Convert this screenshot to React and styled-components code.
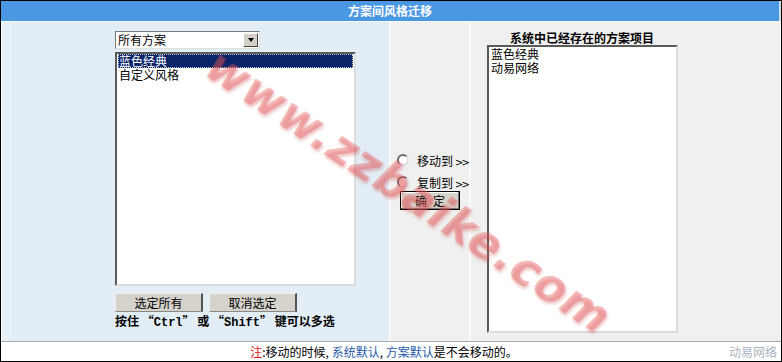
import React from "react";
import styled, { createGlobalStyle } from "styled-components";

const Global = createGlobalStyle`
  html, body { margin: 0; padding: 0; background: #fff; }
  body { font-family: "Noto Sans CJK SC", "DejaVu Sans", sans-serif; font-size: 12px; color: #000; }
  * { box-sizing: border-box; }
`;

const Frame = styled.div`
  position: relative;
  width: 782px;
  height: 362px;
  border: 1px solid #000;
  background: #fff;
  display: flex;
  flex-direction: column;
  overflow: hidden;
`;

const Header = styled.div`
  height: 20px;
  background: #4a97e2;
  color: #fff;
  font-weight: bold;
  font-size: 12px;
  line-height: 20px;
  text-align: center;
  border-right: 2px solid #cfe0ef;
`;

const Body = styled.div`
  height: 320px;
  display: grid;
  grid-template-columns: 387px 78px 309px;
  gap: 2px;
  padding: 1px 2px 0 1px;
  background: #fafafa;
`;

const Column = styled.div`
  background: ${(p) => p.$bg};
  display: flex;
  flex-direction: column;
  align-items: ${(p) => p.$align || "stretch"};
  padding: ${(p) => p.$pad};
  border-left: ${(p) => (p.$strip ? "10px solid #e8f0f7" : "none")};
`;

const SelectBox = styled.div`
  width: 145px;
  height: 18px;
  background: #fff;
  border-top: 1px solid #7a7a7a;
  border-left: 1px solid #7a7a7a;
  border-right: 1px solid #e0e0e0;
  border-bottom: 1px solid #e0e0e0;
  display: flex;
  align-items: center;
  justify-content: space-between;
  padding-left: 2px;
  line-height: 16px;
`;

const ArrowBtn = styled.div`
  width: 15px;
  height: 14px;
  margin-right: 1px;
  background: #d4d0c8;
  border-top: 1px solid #fff;
  border-left: 1px solid #fff;
  border-right: 1px solid #404040;
  border-bottom: 1px solid #404040;
  display: flex;
  align-items: center;
  justify-content: center;
  &::after {
    content: "";
    border-left: 3px solid transparent;
    border-right: 3px solid transparent;
    border-top: 4px solid #000;
  }
`;

const ListBox = styled.div`
  width: ${(p) => p.$w}px;
  height: ${(p) => p.$h}px;
  margin-top: ${(p) => p.$mt || 0}px;
  margin-left: ${(p) => p.$ml || 0}px;
  background: #fff;
  border-top: 2px solid #5a5a5a;
  border-left: 2px solid #5a5a5a;
  border-right: 2px solid #dcdcdc;
  border-bottom: 2px solid #dcdcdc;
  padding: 0 1px;
  display: flex;
  flex-direction: column;
`;

const Item = styled.div`
  height: 14px;
  line-height: 14px;
  padding-left: 1px;
  background: ${(p) => (p.$sel ? "#0a246a" : "transparent")};
  color: ${(p) => (p.$sel ? "#fff" : "#000")};
  outline: ${(p) => (p.$sel ? "1px dotted #c8c8c8" : "none")};
  outline-offset: -1px;
`;

const ButtonRow = styled.div`
  display: flex;
  gap: 6px;
  margin-top: 7px;
`;

const Btn = styled.div`
  width: ${(p) => p.$w}px;
  height: 19px;
  background: #d6d3cd;
  border-right: 2px solid #555;
  border-bottom: 1px solid #888;
  border-top: 1px solid #eee;
  border-left: 1px solid #eee;
  display: flex;
  align-items: center;
  justify-content: center;
  line-height: 1;
`;

const Hint = styled.div`
  font-weight: bold;
  margin-top: 2px;
  line-height: 14px;
  white-space: nowrap;
`;

const Mono = styled.span`
  font-family: "Liberation Mono", "DejaVu Sans Mono", monospace;
  font-weight: bold;
  font-size: 12px;
`;

const RadioGroup = styled.div`
  display: flex;
  flex-direction: column;
  gap: 4px;
`;

const RadioRow = styled.div`
  display: flex;
  align-items: center;
  height: 18px;
  padding-left: 6px;
  gap: 8px;
  white-space: nowrap;
`;

const Radio = styled.span`
  flex: none;
  width: 12px;
  height: 12px;
  border-radius: 50%;
  background: #fff;
  border: 2px solid;
  border-color: #6a6a6a #dcdcdc #dcdcdc #6a6a6a;
`;

const Arrows = styled.span`
  margin-left: 2px;
  font-family: "DejaVu Sans", sans-serif;
  font-size: 10px;
  letter-spacing: -2px;
`;

const OkBtn = styled.div`
  margin-left: 9px;
  width: 60px;
  height: 19px;
  border: 1px solid #000;
  background: #d6d3cd;
  box-shadow: inset -1px -1px 0 #777, inset 1px 1px 0 #fff;
  display: flex;
  align-items: center;
  justify-content: center;
  letter-spacing: 6px;
  padding-left: 6px;
`;

const RightTitle = styled.div`
  font-weight: bold;
  line-height: 14px;
  width: 190px;
  text-align: center;
  margin-left: 12px;
`;

const Footer = styled.div`
  flex: 1;
  border-top: 1px solid #a2acb6;
  display: grid;
  grid-template-columns: 1fr auto 1fr;
  align-items: center;
  padding: 0 4px 0 0;
`;

const Note = styled.div`
  grid-column: 2;
  margin-right: 10px;
`;

const Tint = styled.span`
  color: ${(p) => p.$c};
`;

const Brand = styled.div`
  grid-column: 3;
  justify-self: end;
  color: #a8b4c0;
`;

const Watermark = styled.div`
  position: absolute;
  left: 408px;
  top: 190px;
  transform: translate(-50%, -50%) rotate(33.5deg);
  font-family: "DejaVu Sans", sans-serif;
  font-weight: bold;
  font-style: italic;
  font-size: 46px;
  letter-spacing: 1px;
  color: rgba(235, 90, 90, 0.4);
  text-shadow: 2px 2px 3px rgba(200, 60, 60, 0.3);
  white-space: nowrap;
  pointer-events: none;
`;

export default function App() {
  return (
    <>
      <Global />
      <Frame>
        <Header>方案间风格迁移</Header>
        <Body>
          <Column $bg="#e2edf6" $pad="9px 0 0 103px" $strip>
            <SelectBox>
              <span>所有方案</span>
              <ArrowBtn />
            </SelectBox>
            <ListBox $w={241} $h={234} $mt={3}>
              <Item $sel>蓝色经典</Item>
              <Item>自定义风格</Item>
            </ListBox>
            <ButtonRow>
              <Btn $w={88}>选定所有</Btn>
              <Btn $w={88}>取消选定</Btn>
            </ButtonRow>
            <Hint>
              按住 “<Mono>Ctrl</Mono>” 或 “<Mono>Shift</Mono>” 键可以多选
            </Hint>
          </Column>
          <Column $bg="#f0f0f0" $pad="129px 0 0 0">
            <RadioGroup>
              <RadioRow>
                <Radio />
                <span>
                  移动到<Arrows>&gt;&gt;</Arrows>
                </span>
              </RadioRow>
              <RadioRow>
                <Radio />
                <span>
                  复制到<Arrows>&gt;&gt;</Arrows>
                </span>
              </RadioRow>
            </RadioGroup>
            <OkBtn>确定</OkBtn>
          </Column>
          <Column $bg="#f0f0f0" $pad="9px 0 0 4px">
            <RightTitle>系统中已经存在的方案项目</RightTitle>
            <ListBox $w={191} $h={288} $ml={12}>
              <Item>蓝色经典</Item>
              <Item>动易网络</Item>
            </ListBox>
          </Column>
        </Body>
        <Footer>
          <Note>
            <Tint $c="#e02020">注</Tint>:移动的时候, <Tint $c="#2a5aa8">系统默认</Tint>,{" "}
            <Tint $c="#2a5aa8">方案默认</Tint>是不会移动的。
          </Note>
          <Brand>动易网络</Brand>
        </Footer>
        <Watermark>www.zzbaike.com</Watermark>
      </Frame>
    </>
  );
}
